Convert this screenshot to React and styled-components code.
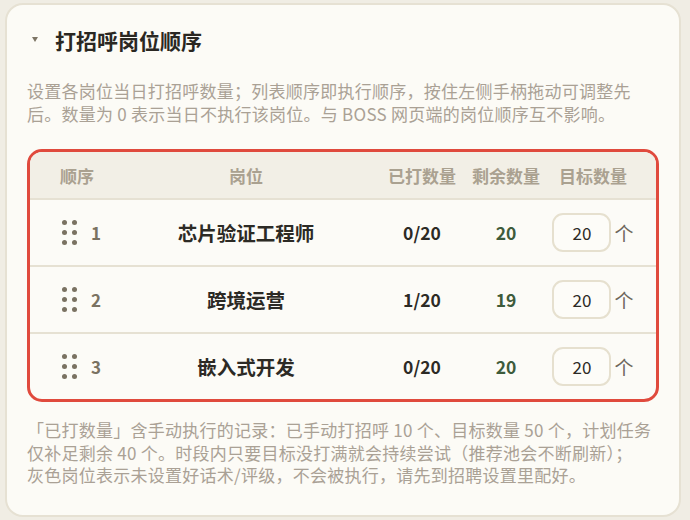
import React from "react";
import styled, { createGlobalStyle } from "styled-components";

const Global = createGlobalStyle`
  html, body {
    margin: 0;
    padding: 0;
    background: #f0ede4;
  }
  body {
    font-family: "Noto Sans CJK SC", "Noto Sans", sans-serif;
    -webkit-font-smoothing: antialiased;
  }
  * { box-sizing: border-box; }
`;

const Page = styled.div`
  padding: 3px 9px 3px 5px;
`;

const Card = styled.section`
  background: #fcfbf6;
  border: 2px solid #e6e1d3;
  border-radius: 18px;
  padding: 20px 20px 28px;
`;

const TitleRow = styled.div`
  display: flex;
  align-items: center;
  height: 30px;
`;

const Caret = styled.span`
  width: 0;
  height: 0;
  margin-left: 5px;
  margin-right: 17px;
  margin-bottom: 2px;
  border-left: 3.5px solid transparent;
  border-right: 3.5px solid transparent;
  border-top: 5px solid #7d7565;
`;

const Title = styled.h2`
  margin: 0;
  font-size: 21px;
  font-weight: 700;
  color: #2a2722;
  line-height: 30px;
`;

const Note = styled.p`
  margin: ${(p) => p.$top}px 0 0;
  font-size: 17px;
  letter-spacing: 0.25px;
  line-height: 22.5px;
  color: #aaa195;
`;

const Table = styled.div`
  margin-top: 24px;
  border: 3px solid #e04a3d;
  border-radius: 15px;
  overflow: hidden;
  background: #fcfbf7;
`;

const Row = styled.div`
  display: grid;
  grid-template-columns: 90px 1fr 84px 84px 90px;
  align-items: center;
  padding: 0 18px 0 30px;
  height: ${(p) => (p.$head ? 48 : 67)}px;
  background: ${(p) => (p.$head ? "#f2efe6" : "transparent")};
  border-bottom: 2px solid #e6e1d3;
  &:last-child {
    border-bottom: none;
    height: 65px;
  }
`;

const HeadCell = styled.div`
  font-size: 17px;
  font-weight: 700;
  color: #aaa190;
  text-align: ${(p) => p.$align || "center"};
  padding-right: ${(p) => p.$pr || 0}px;
  white-space: nowrap;
`;

const OrderCell = styled.div`
  display: flex;
  align-items: center;
  gap: 14px;
  padding-left: 2px;
`;

const Grip = styled.div`
  display: grid;
  grid-template-columns: 5px 5px;
  grid-auto-rows: 5px;
  gap: 5px;
  cursor: grab;
  span {
    border-radius: 50%;
    background: #7a7262;
  }
`;

const OrderNum = styled.span`
  font-size: 17px;
  font-weight: 700;
  color: #7a7262;
`;

const Name = styled.div`
  font-size: 19.5px;
  font-weight: 700;
  color: #2c2a25;
  text-align: center;
  padding-right: 38px;
`;

const Count = styled.div`
  font-size: 17.5px;
  font-weight: 700;
  text-align: center;
  color: ${(p) => (p.$green ? "#3e5b3b" : "#2c2a25")};
`;

const TargetCell = styled.div`
  display: flex;
  align-items: center;
  justify-content: center;
  gap: 3px;
`;

const Qty = styled.input`
  width: 59px;
  height: 39px;
  border: 2px solid #e6e0cf;
  border-radius: 11px;
  background: #fdfcf8;
  font-family: inherit;
  font-size: 17px;
  color: #2c2a25;
  text-align: center;
  padding: 0;
  outline: none;
`;

const Unit = styled.span`
  font-size: 19px;
  color: #6e675c;
`;

const Line = styled.span`
  display: block;
`;

const jobs = [
  { order: 1, name: "芯片验证工程师", done: 0, target: 20 },
  { order: 2, name: "跨境运营", done: 1, target: 20 },
  { order: 3, name: "嵌入式开发", done: 0, target: 20 },
];

export default function App() {
  return (
    <Page>
      <Global />
      <Card>
        <TitleRow>
          <Caret />
          <Title>打招呼岗位顺序</Title>
        </TitleRow>
        <Note $top={25}>
          设置各岗位当日打招呼数量；列表顺序即执行顺序，按住左侧手柄拖动可调整先后。数量为 0 表示当日不执行该岗位。与 BOSS 网页端的岗位顺序互不影响。
        </Note>
        <Table>
          <Row $head>
            <HeadCell $align="left">顺序</HeadCell>
            <HeadCell $pr={38}>岗位</HeadCell>
            <HeadCell>已打数量</HeadCell>
            <HeadCell>剩余数量</HeadCell>
            <HeadCell>目标数量</HeadCell>
          </Row>
          {jobs.map((j) => (
            <Row key={j.order}>
              <OrderCell>
                <Grip>
                  {Array.from({ length: 6 }, (_, i) => (
                    <span key={i} />
                  ))}
                </Grip>
                <OrderNum>{j.order}</OrderNum>
              </OrderCell>
              <Name>{j.name}</Name>
              <Count>
                {j.done}/{j.target}
              </Count>
              <Count $green>{j.target - j.done}</Count>
              <TargetCell>
                <Qty defaultValue={j.target} />
                <Unit>个</Unit>
              </TargetCell>
            </Row>
          ))}
        </Table>
        <Note $top={17}>
          <Line>
            「已打数量」含手动执行的记录：已手动打招呼 10 个、目标数量 50 个，计划任务仅补足剩余 40 个。时段内只要目标没打满就会持续尝试（推荐池会不断刷新）；
          </Line>
          <Line>灰色岗位表示未设置好话术/评级，不会被执行，请先到招聘设置里配好。</Line>
        </Note>
      </Card>
    </Page>
  );
}
